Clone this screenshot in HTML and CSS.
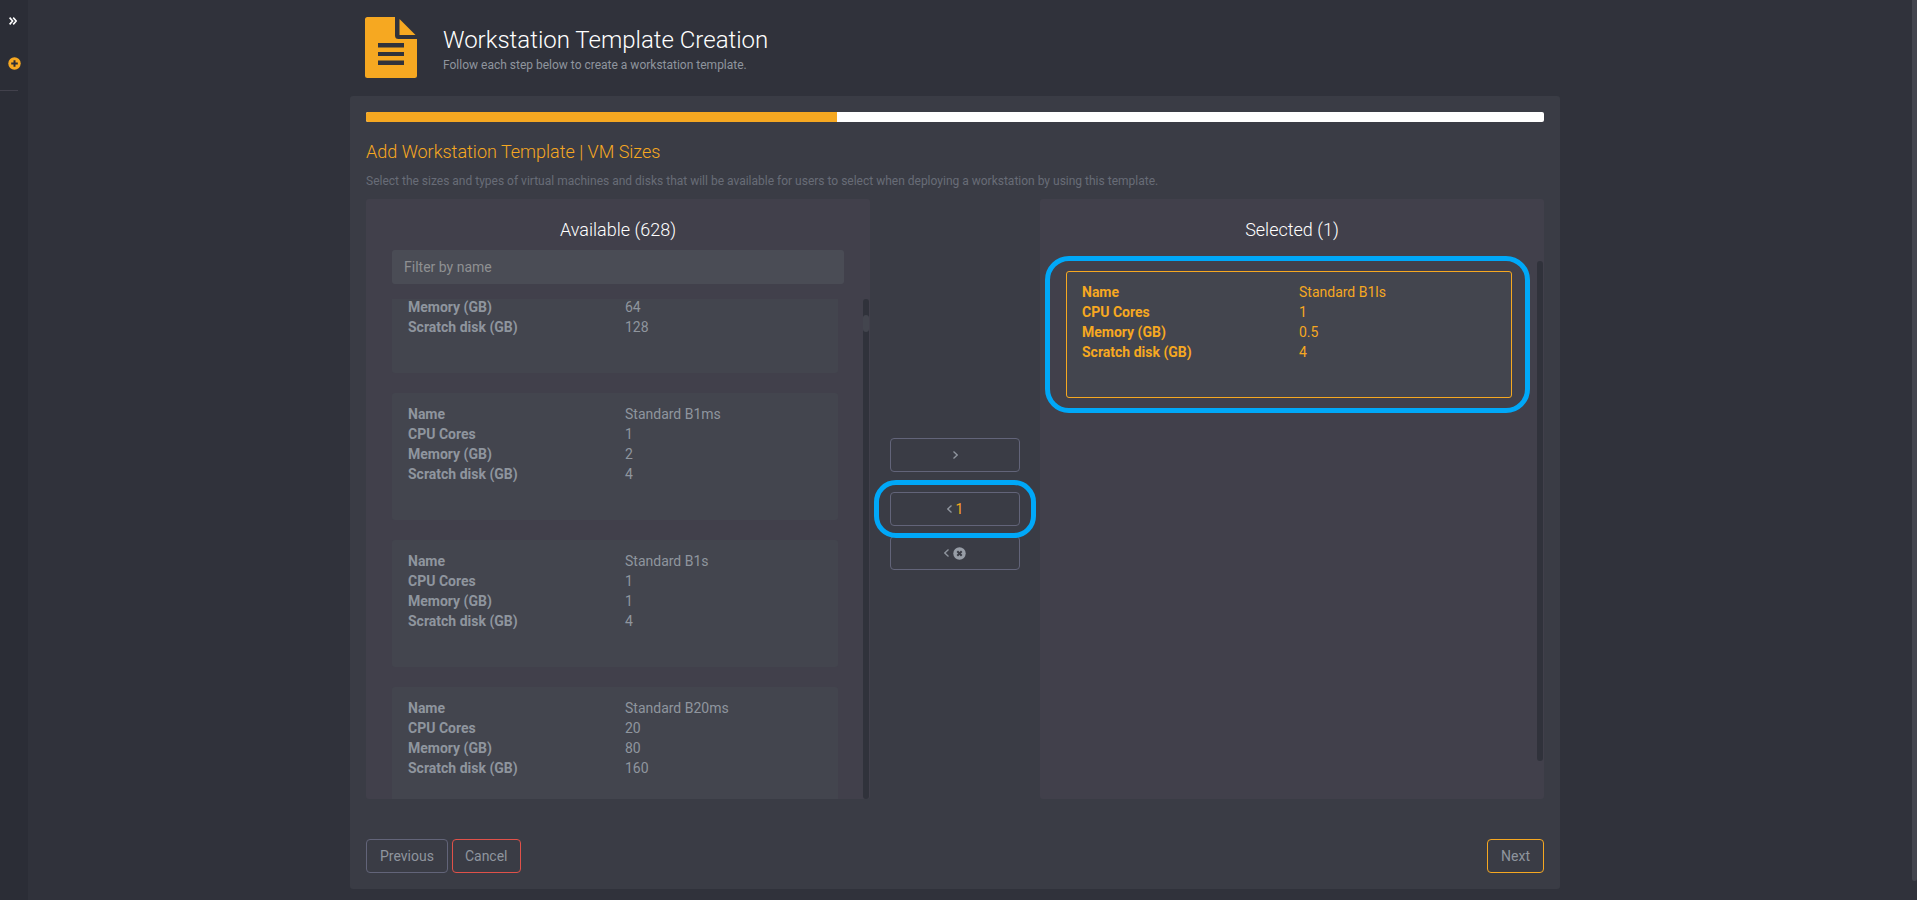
FILE: index.html
```html
<!DOCTYPE html>
<html lang="en">
<head>
<meta charset="utf-8">
<meta name="viewport" content="width=device-width, initial-scale=1">
<title>Workstation Template Creation</title>
<link rel="stylesheet" href="styles.css">
</head>
<body>
<nav class="sidebar" aria-label="Main">
  <button class="side-button side-expand" type="button" aria-label="Expand menu">
    <svg width="8" height="8" viewBox="0 0 8 8" fill="none" stroke="#fff" stroke-width="1.6"><path d="M.6.6 3.6 4 .6 7.4M4.2.6 7.2 4 4.2 7.4"/></svg>
  </button>
  <button class="side-button side-add" type="button" aria-label="Add">
    <svg width="13" height="13" viewBox="0 0 13 13"><circle cx="6.5" cy="6.5" r="6.2" fill="#f6a821"/><path d="M6.5 3.2v6.6M3.2 6.5h6.6" stroke="#2b2d36" stroke-width="2"/></svg>
  </button>
  <hr class="side-line">
</nav>
<div class="page-scroll"></div>

<main class="main">
  <header class="header">
    <svg class="header-icon" width="52" height="61" viewBox="0 0 52 61" fill="#f6a821">
      <path fill-rule="evenodd" d="M2.5 0H30v18.500q0 3.500 3.500 3.500H52v36.500q0 2.500-2.500 2.500h-47Q0 61 0 58.500v-56Q0 0 2.500 0ZM13 26v4.500h26v-4.500Zm0 9v4h26v-4Zm0 8.500v4.500h26v-4.500Z"/>
      <path d="M34.500 2 50.500 18h-16Z"/>
    </svg>
    <div>
      <h1 class="title">Workstation Template Creation</h1>
      <p class="subtitle">Follow each step below to create a workstation template.</p>
    </div>
  </header>

  <section class="card">
    <div class="progress"><div class="progress-value" style="width: 40%"></div></div>
    <h2 class="step-title">Add Workstation Template | VM Sizes</h2>
    <p class="step-text">Select the sizes and types of virtual machines and disks that will be available for users to select when deploying a workstation by using this template.</p>

    <div class="picker">
      <section class="panel">
        <h3 class="panel-title">Available (628)</h3>
        <input class="filter" type="text" placeholder="Filter by name" aria-label="Filter by name">
        <div class="viewport">
          <div class="list list-scrolled">
            <dl class="item item-cut">
              <dt>Memory (GB)</dt><dd>64</dd>
              <dt>Scratch disk (GB)</dt><dd>128</dd>
            </dl>
            <dl class="item">
              <dt>Name</dt><dd>Standard B1ms</dd>
              <dt>CPU Cores</dt><dd>1</dd>
              <dt>Memory (GB)</dt><dd>2</dd>
              <dt>Scratch disk (GB)</dt><dd>4</dd>
            </dl>
            <dl class="item">
              <dt>Name</dt><dd>Standard B1s</dd>
              <dt>CPU Cores</dt><dd>1</dd>
              <dt>Memory (GB)</dt><dd>1</dd>
              <dt>Scratch disk (GB)</dt><dd>4</dd>
            </dl>
            <dl class="item">
              <dt>Name</dt><dd>Standard B20ms</dd>
              <dt>CPU Cores</dt><dd>20</dd>
              <dt>Memory (GB)</dt><dd>80</dd>
              <dt>Scratch disk (GB)</dt><dd>160</dd>
            </dl>
          </div>
          <div class="track"><div class="thumb"></div></div>
        </div>
      </section>

      <div class="moves">
        <button class="button move" type="button" aria-label="Add selected">
          <svg width="5" height="8" viewBox="0 0 5 8" fill="none" stroke="currentColor" stroke-width="1.300"><path d="M.5.5 4.200 4 .5 7.500"/></svg>
        </button>
        <div class="marked move-marked">
          <button class="button move" type="button">
            <svg width="5" height="8" viewBox="0 0 5 8" fill="none" stroke="currentColor" stroke-width="1.300"><path d="M4.500.5.8 4l3.700 3.500"/></svg>
            <span class="count">1</span>
          </button>
        </div>
        <button class="button move" type="button" aria-label="Remove all">
          <svg width="5" height="8" viewBox="0 0 5 8" fill="none" stroke="currentColor" stroke-width="1.300"><path d="M4.500.5.8 4l3.700 3.500"/></svg>
          <svg width="13" height="13" viewBox="0 0 13 13"><circle cx="6.500" cy="6.500" r="6.200" fill="#979da6"/><path d="m4.300 4.300 4.400 4.400m0-4.400L4.300 8.700" stroke="#3a3c45" stroke-width="2"/></svg>
        </button>
      </div>

      <section class="panel">
        <h3 class="panel-title">Selected (1)</h3>
        <div class="viewport viewport-selected">
          <div class="list">
            <div class="marked item-marked">
              <dl class="item item-selected">
                <dt>Name</dt><dd>Standard B1ls</dd>
                <dt>CPU Cores</dt><dd>1</dd>
                <dt>Memory (GB)</dt><dd>0.5</dd>
                <dt>Scratch disk (GB)</dt><dd>4</dd>
              </dl>
            </div>
          </div>
          <div class="track"></div>
        </div>
      </section>
    </div>

    <footer class="footer">
      <button class="button" type="button">Previous</button>
      <button class="button button-cancel" type="button">Cancel</button>
      <button class="button button-next" type="button">Next</button>
    </footer>
  </section>
</main>
</body>
</html>
```

FILE: styles.css
```css
* {
  box-sizing: border-box;
}

body {
  margin: 0;
  min-height: 100vh;
  padding-right: 7px;
  background: #30323b;
  color: #8f959e;
  font: 14px/20px Roboto, "Liberation Sans", sans-serif;
}

h1, h2, h3, p, dl, dd {
  margin: 0;
}

.sidebar {
  position: fixed;
  top: 0;
  bottom: 0;
  left: 0;
  width: 28px;
  padding-top: 14px;
  background: #2b2d36;
}

.side-button {
  display: flex;
  align-items: center;
  justify-content: center;
  width: 28px;
  height: 13px;
  padding: 0;
  border: 0;
  background: none;
}

.side-expand {
  width: 26px;
}

.side-add {
  margin-top: 30px;
}

.side-line {
  width: 18px;
  margin: 20px 0 0;
  border: 0;
  border-top: 1px solid #42414c;
}

.page-scroll {
  position: fixed;
  top: 0;
  right: 0;
  bottom: 19px;
  width: 5px;
  border-radius: 0 0 3px 3px;
  background: #43454e;
}

.main {
  max-width: 1210px;
  margin: 0 auto;
  padding-bottom: 11px;
}

.header {
  display: flex;
  gap: 26px;
  height: 96px;
  padding: 17px 15px 0;
}

.title {
  margin-top: 8px;
  color: #fff;
  font-size: 24px;
  font-weight: 300;
  line-height: 30px;
}

.subtitle {
  font-size: 12px;
  line-height: 20px;
}

.card {
  padding: 16px;
  border-radius: 3px;
  background: #3a3c45;
}

.progress {
  height: 10px;
  border-radius: 2px;
  background: #fff;
  overflow: hidden;
}

.progress-value {
  height: 100%;
  background: #f6a821;
}

.step-title {
  margin-top: 18px;
  color: #f6a821;
  font-size: 18px;
  font-weight: 300;
  line-height: 24px;
}

.step-text {
  margin: 7px 0 8px;
  color: #686c77;
  font-size: 12px;
  line-height: 20px;
}

.picker {
  display: flex;
}

.panel {
  flex: 1;
  height: 600px;
  padding: 18px 26px 0;
  border-radius: 3px;
  background: #41404b;
}

.panel-title {
  color: #fff;
  font-size: 18px;
  font-weight: 300;
  line-height: 25px;
  text-align: center;
}

.filter {
  display: block;
  width: 100%;
  height: 34px;
  margin-top: 8px;
  padding: 0 12px;
  border: 0;
  border-radius: 3px;
  background: #4a4c55;
  color: #999;
  font: inherit;
}

.filter::placeholder {
  color: #8f9092;
  opacity: 1;
}

.viewport {
  position: relative;
  height: 500px;
  margin: 15px -25px 0 0;
  padding-right: 31px;
  overflow: hidden;
}

.viewport-selected {
  margin-top: 19px;
  margin-left: -26px;
  padding-left: 26px;
  overflow: visible;
}

.list {
  display: flex;
  flex-direction: column;
  gap: 20px;
}

.list-scrolled {
  margin-top: -2px;
}

.viewport-selected .list {
  padding-top: 10px;
}

.item {
  display: grid;
  grid-template-columns: 1fr 1fr;
  grid-auto-rows: 20px;
  column-gap: 20px;
  height: 127px;
  flex: none;
  padding: 10px 15px;
  border: 1px solid transparent;
  border-radius: 3px;
  background: #43454e;
}

.item dt {
  font-weight: 700;
}

.item-cut {
  height: 76px;
  padding-top: 0;
  border-top: 0;
}

.item-selected {
  border-color: #f6a821;
  color: #f6a821;
}

.track {
  position: absolute;
  top: 0;
  right: 0;
  width: 6px;
  height: 100%;
  padding-top: 16px;
  border-radius: 3px;
  background: #30323b;
}

.thumb {
  height: 17px;
  border-radius: 3px;
  background: #43454e;
}

.moves {
  display: flex;
  flex-direction: column;
  flex: none;
  width: 170px;
  padding: 239px 20px 0;
}

.button {
  height: 34px;
  padding: 0 13px;
  border: 1px solid #626479;
  border-radius: 4px;
  background: #3a3c45;
  color: #8f959e;
  font: inherit;
}

.move {
  display: flex;
  align-items: center;
  justify-content: center;
  gap: 4px;
  width: 100%;
}

.count {
  color: #f6a821;
}

.marked {
  position: relative;
}

.marked::after {
  content: "";
  position: absolute;
  border: 5px solid #00a8f8;
  pointer-events: none;
}

.move-marked {
  z-index: 1;
  margin: 20px 0 10px;
}

.move-marked::after {
  inset: -12px -16px;
  border-radius: 22px;
}

.item-marked::after {
  inset: -15px -18px -15px -21px;
  border-radius: 24px;
}

.footer {
  display: flex;
  gap: 4px;
  margin-top: 40px;
}

.button-cancel {
  padding: 0 12px;
  border-color: #e05149;
}

.button-next {
  margin-left: auto;
  border-color: #f6a821;
}
```
